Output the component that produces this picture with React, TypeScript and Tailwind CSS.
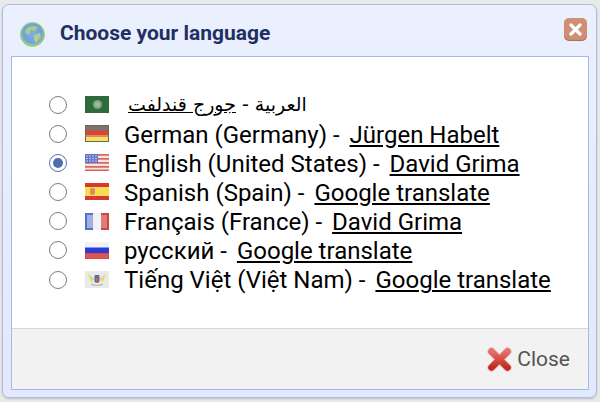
const font = { fontFamily: "Roboto, 'DejaVu Sans', sans-serif" };

function Flag({ code }: { code: string }) {
  return (
    <svg width="24" height="17" viewBox="0 0 24 17" className="shrink-0">
      {code === "sa" && (
        <g>
          <rect width="24" height="17" fill="#2f6b3a" />
          <circle cx="12.5" cy="8.5" r="4.5" fill="#7fa385" />
          <circle cx="12.5" cy="8.5" r="2.5" fill="#9dbb9f" />
        </g>
      )}
      {code === "de" && (
        <g>
          <rect width="24" height="17" fill="#6e6a48" />
          <rect x="1" y="1" width="22" height="5" fill="#7a7570" />
          <rect x="1" y="5" width="22" height="5" fill="#cf4a3e" />
          <rect x="1" y="10" width="22" height="3" fill="#e88a52" />
          <rect x="1" y="12" width="22" height="4" fill="#f6e06a" />
        </g>
      )}
      {code === "us" && (
        <g>
          <rect width="24" height="17" fill="#f6e4e2" />
          {[0, 4, 8, 12, 15.5].map((y) => (
            <rect key={y} y={y} width="24" height="1.7" fill="#d8645c" />
          ))}
          <rect width="13" height="9" fill="#5f76cc" />
          {[2, 4.5, 7].map((y) =>
            [2, 5, 8, 11].map((x) => (
              <rect key={`${x}-${y}`} x={x - 0.6} y={y - 0.6} width="1.2" height="1.2" fill="#e6ecfc" />
            )),
          )}
        </g>
      )}
      {code === "es" && (
        <g>
          <rect width="24" height="17" fill="#d9382e" />
          <rect y="4" width="24" height="9" fill="#f6de50" />
          <rect x="5" y="5" width="5" height="7" rx="2" fill="#d98a68" />
        </g>
      )}
      {code === "fr" && (
        <g>
          <rect width="24" height="17" fill="#f0f2f8" />
          <rect width="8" height="17" fill="#5670c4" />
          <rect x="16" width="8" height="17" fill="#d0453c" />
          <rect x="2" y="2" width="6" height="13" fill="#fff" opacity="0.45" />
          <rect x="16" y="2" width="6" height="13" fill="#fff" opacity="0.3" />
        </g>
      )}
      {code === "ru" && (
        <g>
          <rect width="24" height="6" fill="#f1f1f8" />
          <rect y="5.5" width="24" height="6" fill="#2a3bdc" />
          <rect y="11" width="24" height="6" fill="#d8473f" />
          <rect x="1" y="12" width="22" height="4" fill="#fff" opacity="0.1" />
        </g>
      )}
      {code === "vi" && (
        <g>
          <rect width="24" height="17" fill="#e9ebe6" />
          <path d="M3 3 L10 8 L6 11 Z M21 3 L14 8 L18 11 Z" fill="#e8d96a" />
          <rect x="9.5" y="4" width="5" height="7.5" rx="1" fill="#5f68ac" />
          <rect x="11" y="7" width="2" height="5" fill="#c9605a" />
          <path d="M6 13 Q12 16 18 13" stroke="#aab4c6" strokeWidth="1.2" fill="none" />
        </g>
      )}
    </svg>
  );
}

function Radio({ checked }: { checked?: boolean }) {
  return (
    <span
      className={`flex h-[18px] w-[18px] shrink-0 items-center justify-center rounded-full border-[1.5px] bg-white ${
        checked ? "border-[#4f76b3]" : "border-[#7d7d7d]"
      }`}
    >
      {checked && <span className="h-[10px] w-[10px] rounded-full bg-[#4f6fa8]" />}
    </span>
  );
}

const rows = [
  { code: "de", label: "German (Germany)", by: "Jürgen Habelt" },
  { code: "us", label: "English (United States)", by: "David Grima", checked: true },
  { code: "es", label: "Spanish (Spain)", by: "Google translate" },
  { code: "fr", label: "Français (France)", by: "David Grima" },
  { code: "ru", label: "русский", by: "Google translate" },
  { code: "vi", label: "Tiếng Việt (Việt Nam)", by: "Google translate" },
];

export default function App() {
  return (
    <div className="h-[402px] w-[600px] bg-[#e9e9e9] pb-[4px] pl-[2px] pr-[3px] pt-[4px]" style={font}>
      <div className="flex h-full flex-col rounded-[7px] border border-[#a9bde6] bg-gradient-to-b from-[#eaf0fd] to-[#e2e9fc] pb-[7px] pl-[8px] pr-[7px] shadow-[0_1px_2px_rgba(0,0,0,0.2)]">
        <div className="flex h-[51px] shrink-0 items-start justify-between">
          <div className="flex items-center gap-[15px] pl-[9px] pt-[17px]">
            <svg width="25" height="25" viewBox="0 0 25 25">
              <defs>
                <radialGradient id="globe" cx="0.5" cy="0.45" r="0.55">
                  <stop offset="0" stopColor="#7db0e6" />
                  <stop offset="0.7" stopColor="#6fa2d8" />
                  <stop offset="1" stopColor="#a5d67c" />
                </radialGradient>
              </defs>
              <circle cx="12.5" cy="12.5" r="12" fill="url(#globe)" stroke="#9ccf76" />
              <path d="M6 7 Q11 2 18 5 L15 9 L11 8 L9 13 L5 11 Z" fill="#a8cc88" />
              <path d="M14 13 L20 11 L21 15 L16 21 L14 18 Z" fill="#aecd92" />
            </svg>
            <span className="pb-[2px] text-[21px] font-bold leading-none text-[#1f2f63]">Choose your language</span>
          </div>
          <span className="mr-[2px] mt-[13px] flex h-[23px] w-[23px] items-center justify-center rounded-[5px] bg-[#d08f74] shadow-[inset_0_-1px_1px_rgba(120,60,30,0.4)]">
            <svg width="13" height="13" viewBox="0 0 13 13">
              <path d="M2 2 L11 11 M11 2 L2 11" stroke="#fff" strokeWidth="3.2" strokeLinecap="round" />
            </svg>
          </span>
        </div>

        <div className="flex min-h-0 flex-1 flex-col border border-[#a3b9e8] bg-white">
          <div className="flex flex-1 flex-col pl-[37px] pt-[33px] text-[24px] leading-[29.2px] text-black">
            <div className="flex h-[29px] items-center">
              <Radio />
              <span className="ml-[18px]">
                <Flag code="sa" />
              </span>
              <span className="ml-[19px] text-[19px]" dir="rtl" style={{ fontFamily: "'DejaVu Sans', sans-serif" }}>
                العربية - <u>جورج قندلفت</u>
              </span>
            </div>
            {rows.map((r) => (
              <div key={r.code} className="flex h-[29.2px] items-center whitespace-pre">
                <Radio checked={r.checked} />
                <span className="ml-[18px]">
                  <Flag code={r.code} />
                </span>
                <span className="ml-[15px] pt-[3px]">{r.label} - </span>
                <u className="ml-[4px] pt-[3px]">{r.by}</u>
              </div>
            ))}
          </div>
          <div className="flex h-[61px] shrink-0 items-center justify-end border-t border-[#d8d8d8] bg-[#f2f2f2] pr-[18px]">
            <svg width="25" height="25" viewBox="0 0 25 25">
              <defs>
                <linearGradient id="cross" x1="0" y1="0" x2="0" y2="1">
                  <stop offset="0" stopColor="#e2716a" />
                  <stop offset="1" stopColor="#c02a20" />
                </linearGradient>
              </defs>
              <path d="M4.5 4.5 L20.5 20.5 M20.5 4.5 L4.5 20.5" stroke="#e9b5b0" strokeWidth="8" strokeLinecap="round" />
              <path d="M4.5 4.5 L20.5 20.5 M20.5 4.5 L4.5 20.5" stroke="url(#cross)" strokeWidth="6.5" strokeLinecap="round" />
            </svg>
            <span className="ml-[5px] text-[21px] leading-none text-[#555]">Close</span>
          </div>
        </div>
      </div>
    </div>
  );
}
